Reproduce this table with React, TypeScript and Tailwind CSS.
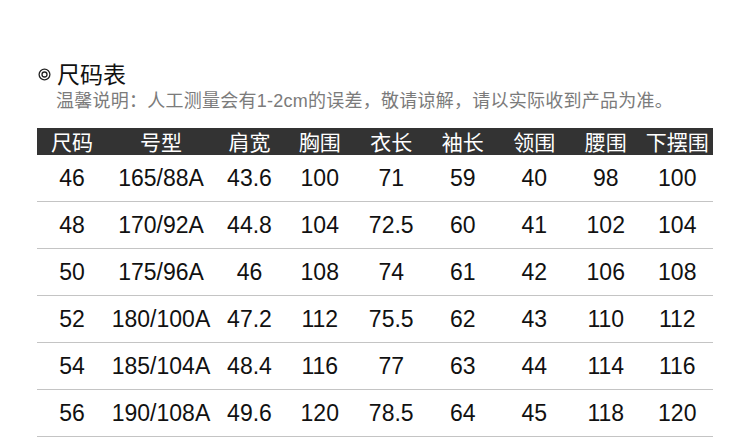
import React from 'react';

const headers = ['尺码', '号型', '肩宽', '胸围', '衣长', '袖长', '领围', '腰围', '下摆围'];

const rows: string[][] = [
  ['46', '165/88A', '43.6', '100', '71', '59', '40', '98', '100'],
  ['48', '170/92A', '44.8', '104', '72.5', '60', '41', '102', '104'],
  ['50', '175/96A', '46', '108', '74', '61', '42', '106', '108'],
  ['52', '180/100A', '47.2', '112', '75.5', '62', '43', '110', '112'],
  ['54', '185/104A', '48.4', '116', '77', '63', '44', '114', '116'],
  ['56', '190/108A', '49.6', '120', '78.5', '64', '45', '118', '120'],
];

const cjk = "font-['Noto_Sans_CJK_SC','Noto_Sans',sans-serif]";
const cols = 'grid grid-cols-[70px_108px_69px_repeat(6,71.5px)]';

const SizeChart: React.FC = () => {
  return (
    <div className="w-[750px] h-[437px] bg-white overflow-hidden pl-[37px] pt-[59px]">
      {/* Title */}
      <div className={`flex items-center h-[28px] text-[23px] leading-[28px] text-[#111] ${cjk}`}>
        <svg width="13" height="13" viewBox="0 0 13 13" className="ml-[1px] mr-[6px] mt-[2px]">
          <circle cx="6.5" cy="6.5" r="5.4" fill="none" stroke="#222" strokeWidth="1.3" />
          <circle cx="6.5" cy="6.5" r="2.5" fill="none" stroke="#222" strokeWidth="1.3" />
        </svg>
        <span>尺码表</span>
      </div>
      <div className="mt-[2px] pl-[19px] h-[24px] text-[18px] leading-[24px] tracking-[0.25px] text-[#7b7b7b] font-['Liberation_Sans','Noto_Sans_CJK_SC',sans-serif] whitespace-nowrap">
        温馨说明：人工测量会有1-2cm的误差，敬请谅解，请以实际收到产品为准。
      </div>

      {/* Table */}
      <div className="mt-[15px] w-[676px]">
        <div className={`${cols} h-[27px] bg-[#333333] text-white text-[21px] leading-[27px] ${cjk}`}>
          {headers.map((h) => (
            <div key={h} className="text-center whitespace-nowrap">{h}</div>
          ))}
        </div>
        {rows.map((r) => (
          <div
            key={r[0]}
            className={`${cols} h-[47px] border-b border-[#c4c4c4] text-[23px] text-[#111] font-['Liberation_Sans',Arial,sans-serif]`}
          >
            {r.map((v, i) => (
              <div key={i} className="flex items-center justify-center whitespace-nowrap">{v}</div>
            ))}
          </div>
        ))}
      </div>
    </div>
  );
};

export default function App() {
  return <SizeChart />;
}
